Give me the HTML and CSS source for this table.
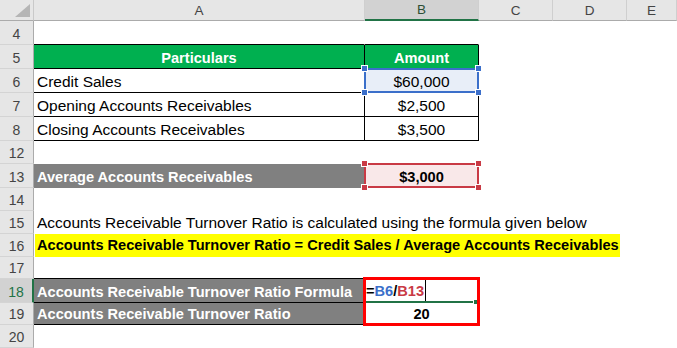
FILE: index.html
```html
<!DOCTYPE html>
<html>
<head>
<meta charset="utf-8">
<link rel="stylesheet" href="styles.css">
</head>
<body>
<div class="sheet">
  <div class="row r21">
    <div class="cell corner"><svg class="tri" width="33" height="20" viewBox="0 0 33 20"><polygon points="15,17 30,17 30,4" fill="#b5b5b5"/></svg></div>
    <div class="cell ch">A</div>
    <div class="cell ch sel">B</div>
    <div class="cell ch">C</div>
    <div class="cell ch">D</div>
    <div class="cell ch">E</div>
  </div>

  <div class="row r24">
    <div class="cell rh">4</div>
    <div class="cell bb"></div>
    <div class="cell bb"></div>
    <div class="cell"></div><div class="cell"></div><div class="cell"></div>
  </div>

  <div class="row r24">
    <div class="cell rh">5</div>
    <div class="cell bd green">Particulars</div>
    <div class="cell bd green">Amount</div>
    <div class="cell"></div><div class="cell"></div><div class="cell"></div>
  </div>

  <div class="row r24">
    <div class="cell rh">6</div>
    <div class="cell bd">Credit Sales</div>
    <div class="cell bd num rel fill-blue">$60,000
      <span class="frame frame-blue"></span>
      <span class="hdl hdl-blue tl"></span><span class="hdl hdl-blue tr"></span>
      <span class="hdl hdl-blue bl"></span><span class="hdl hdl-blue br"></span>
    </div>
    <div class="cell"></div><div class="cell"></div><div class="cell"></div>
  </div>

  <div class="row r24">
    <div class="cell rh">7</div>
    <div class="cell bd">Opening Accounts Receivables</div>
    <div class="cell bd num">$2,500</div>
    <div class="cell"></div><div class="cell"></div><div class="cell"></div>
  </div>

  <div class="row r24">
    <div class="cell rh">8</div>
    <div class="cell bd">Closing Accounts Receivables</div>
    <div class="cell bd num">$3,500</div>
    <div class="cell"></div><div class="cell"></div><div class="cell"></div>
  </div>

  <div class="row r23">
    <div class="cell rh">12</div>
    <div class="cell"></div><div class="cell"></div><div class="cell"></div><div class="cell"></div><div class="cell"></div>
  </div>

  <div class="row r24">
    <div class="cell rh">13</div>
    <div class="cell gray br-black">Average Accounts Receivables</div>
    <div class="cell num bold rel fill-pink">$3,000
      <span class="frame frame-red"></span>
      <span class="hdl hdl-red tl"></span><span class="hdl hdl-red tr"></span>
      <span class="hdl hdl-red bl"></span><span class="hdl hdl-red br"></span>
    </div>
    <div class="cell"></div><div class="cell"></div><div class="cell"></div>
  </div>

  <div class="row r23">
    <div class="cell rh">14</div>
    <div class="cell"></div><div class="cell"></div><div class="cell"></div><div class="cell"></div><div class="cell"></div>
  </div>

  <div class="row r23">
    <div class="cell rh">15</div>
    <div class="cell">Accounts Receivable Turnover Ratio is calculated using the formula given below</div>
    <div class="cell"></div><div class="cell"></div><div class="cell"></div><div class="cell"></div>
  </div>

  <div class="row r23">
    <div class="cell rh">16</div>
    <div class="cell"><span class="hl">Accounts Receivable Turnover Ratio = Credit Sales / Average Accounts Receivables</span></div>
    <div class="cell"></div><div class="cell"></div><div class="cell"></div><div class="cell"></div>
  </div>

  <div class="row r22">
    <div class="cell rh">17</div>
    <div class="cell bb"></div>
    <div class="cell bb"></div>
    <div class="cell"></div><div class="cell"></div><div class="cell"></div>
  </div>

  <div class="row r24">
    <div class="cell rh rh-active">18</div>
    <div class="cell bd gray">Accounts Receivable Turnover Ratio Formula</div>
    <div class="cell bd bold rel formula"><span><span class="eq">=</span><span class="ref-blue">B6</span>/<span class="ref-red">B13</span><span class="caret"></span></span>
      <span class="active-line"></span>
      <span class="fill-handle"></span>
      <span class="redbox"></span>
    </div>
    <div class="cell"></div><div class="cell"></div><div class="cell"></div>
  </div>

  <div class="row r22">
    <div class="cell rh">19</div>
    <div class="cell bd gray">Accounts Receivable Turnover Ratio</div>
    <div class="cell bd num bold">20</div>
    <div class="cell"></div><div class="cell"></div><div class="cell"></div>
  </div>

  <div class="row r23">
    <div class="cell rh">20</div>
    <div class="cell"></div><div class="cell"></div><div class="cell"></div><div class="cell"></div><div class="cell"></div>
  </div>
</div>
</body>
</html>
```

FILE: styles.css
```css
html, body {
  margin: 0;
  padding: 0;
  background: #ffffff;
}

body {
  font-family: "Liberation Sans", Arial, sans-serif;
  color: #000;
}

.sheet {
  width: 677px;
  height: 348px;
  overflow: hidden;
}

.row {
  display: grid;
  grid-template-columns: 34px 331px 114px 74px 74px 50px;
}

.r21 { height: 21px; }
.r22 { height: 22px; }
.r23 { height: 23px; }
.r24 { height: 24px; }

.cell {
  box-sizing: border-box;
  min-width: 0;
  display: flex;
  align-items: flex-end;
  padding: 0 3px 1px 3px;
  border-right: 1px solid transparent;
  border-bottom: 1px solid transparent;
  font-size: 15.5px;
  line-height: 18px;
  white-space: nowrap;
}

.rel { position: relative; }

/* headers */
.corner {
  background: #e6e6e6;
  border-right-color: #c9c9c9;
  border-bottom-color: #ababab;
  padding: 0;
  align-items: stretch;
}

.tri { display: block; }

.ch {
  background: #e6e6e6;
  border-right-color: #cfcfcf;
  border-bottom-color: #ababab;
  justify-content: center;
  align-items: center;
  padding: 1px 0 0 0;
  font-size: 13.5px;
  color: #444;
}

.ch.sel {
  background: #d2d2d2;
  border-bottom: 2px solid #217346;
  color: #2c4f35;
}

.rh {
  background: #e6e6e6;
  border-right-color: #ababab;
  border-bottom-color: #d4d4d4;
  justify-content: center;
  padding: 0 0 1px 0;
  font-size: 14px;
  color: #444;
}

.rh-active {
  background: #d2d2d2;
  border-right: 2px solid #217346;
  color: #217346;
}

/* borders */
.bb { border-bottom-color: #000; }
.bd { border-right-color: #000; border-bottom-color: #000; }
.br-black { border-right-color: #000; }

/* fills / text */
.green {
  background: #00b050;
  color: #fff;
  font-weight: bold;
  font-size: 14.6px;
  justify-content: center;
}

.gray {
  background: #808080;
  color: #fff;
  font-weight: bold;
  font-size: 14.6px;
}

.num { justify-content: center; }

.bold {
  font-weight: bold;
  font-size: 14.6px;
}

.fill-blue { background: #e8eef8; }
.fill-pink { background: #f9e8e9; }

.hl {
  align-self: stretch;
  display: flex;
  align-items: flex-end;
  background: #ffff00;
  margin: 0 0 -2px -2px;
  padding: 0 1px 3px 2px;
  font-weight: bold;
  font-size: 14.6px;
}

/* selection frames */
.frame {
  position: absolute;
  left: -1px;
  top: -1px;
  right: -1px;
  bottom: -1px;
  border: 2px solid;
  z-index: 2;
}

.frame-blue { border-color: #3b6fca; }
.frame-red { border-color: #c93a45; }

.hdl {
  position: absolute;
  width: 5px;
  height: 5px;
  box-shadow: 0 0 0 1px #fff;
  z-index: 3;
}

.hdl-blue { background: #3b6fca; }
.hdl-red { background: #c93a45; }

.hdl.tl { left: -3px; top: -3px; }
.hdl.tr { right: -3px; top: -3px; }
.hdl.bl { left: -3px; bottom: -3px; }
.hdl.br { right: -3px; bottom: -3px; }

/* formula cell */
.formula {
  padding-left: 1px;
}

.ref-blue { color: #3b6fca; }
.ref-red { color: #c93a45; }

.caret {
  display: inline-block;
  width: 1px;
  height: 21px;
  background: #000;
  margin-left: 1px;
  vertical-align: -5px;
}

.active-line {
  position: absolute;
  left: 0;
  right: 4px;
  bottom: -1px;
  height: 2px;
  background: #217346;
  z-index: 2;
}

.fill-handle {
  position: absolute;
  right: 0;
  bottom: -2px;
  width: 4px;
  height: 4px;
  background: #217346;
  box-shadow: 0 0 0 1px #fff;
  z-index: 2;
}

.redbox {
  position: absolute;
  left: -2px;
  top: -2px;
  width: 117px;
  height: 49px;
  box-sizing: border-box;
  border: 3px solid #ff0000;
  z-index: 4;
}
```
